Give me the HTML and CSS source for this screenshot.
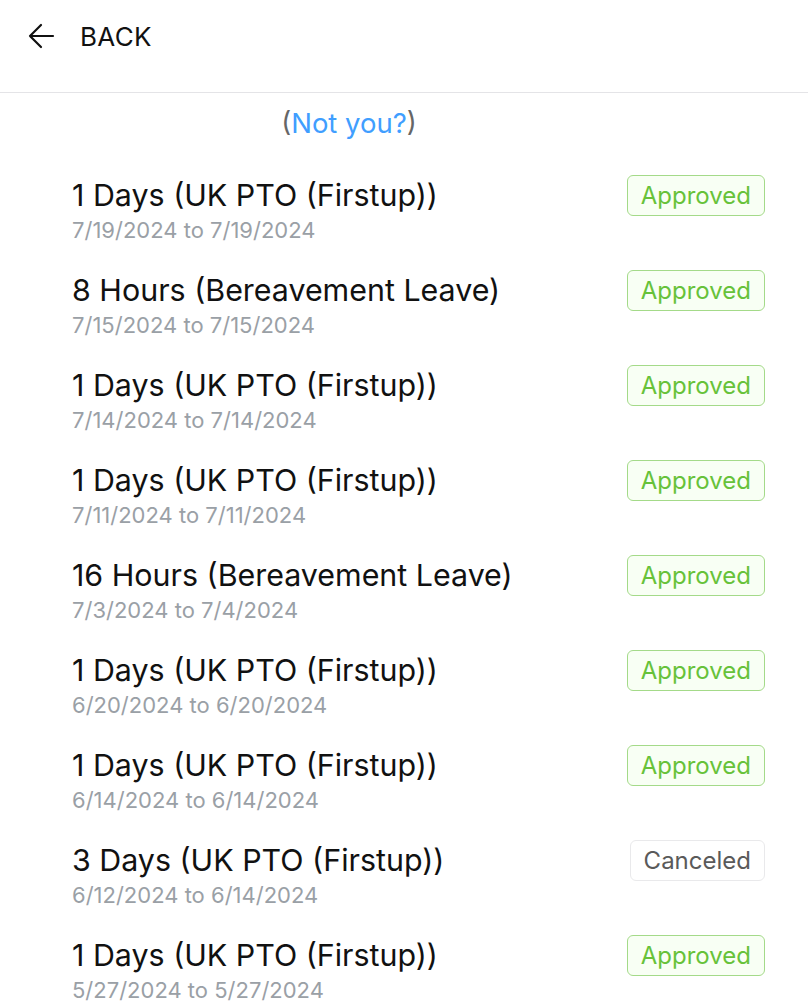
FILE: index.html
```html
<!DOCTYPE html>
<html>
<head>
<meta charset="utf-8">
<link rel="stylesheet" href="styles.css">
</head>
<body>
<header class="topbar">
  <svg class="back-icon" width="28" height="28" viewBox="0 0 28 28"><path d="M26 14H3M14 3L3 14l11 11" fill="none" stroke="#111" stroke-width="2.2" stroke-linecap="round" stroke-linejoin="round"/></svg>
  <span class="back-text">BACK</span>
</header>
<div class="notyou"><span class="paren">(</span><a class="link">Not you?</a><span class="paren">)</span></div>
<ul class="list">
  <li class="row"><div class="info"><div class="title">1 Days (UK PTO (Firstup))</div><div class="dates">7/19/2024 to 7/19/2024</div></div><span class="tag ok">Approved</span></li>
  <li class="row"><div class="info"><div class="title">8 Hours (Bereavement Leave)</div><div class="dates">7/15/2024 to 7/15/2024</div></div><span class="tag ok">Approved</span></li>
  <li class="row"><div class="info"><div class="title">1 Days (UK PTO (Firstup))</div><div class="dates">7/14/2024 to 7/14/2024</div></div><span class="tag ok">Approved</span></li>
  <li class="row"><div class="info"><div class="title">1 Days (UK PTO (Firstup))</div><div class="dates">7/11/2024 to 7/11/2024</div></div><span class="tag ok">Approved</span></li>
  <li class="row"><div class="info"><div class="title">16 Hours (Bereavement Leave)</div><div class="dates">7/3/2024 to 7/4/2024</div></div><span class="tag ok">Approved</span></li>
  <li class="row"><div class="info"><div class="title">1 Days (UK PTO (Firstup))</div><div class="dates">6/20/2024 to 6/20/2024</div></div><span class="tag ok">Approved</span></li>
  <li class="row"><div class="info"><div class="title">1 Days (UK PTO (Firstup))</div><div class="dates">6/14/2024 to 6/14/2024</div></div><span class="tag ok">Approved</span></li>
  <li class="row"><div class="info"><div class="title">3 Days (UK PTO (Firstup))</div><div class="dates">6/12/2024 to 6/14/2024</div></div><span class="tag off">Canceled</span></li>
  <li class="row"><div class="info"><div class="title">1 Days (UK PTO (Firstup))</div><div class="dates">5/27/2024 to 5/27/2024</div></div><span class="tag ok">Approved</span></li>
</ul>
</body>
</html>
```
FILE: styles.css
```css
* { box-sizing: border-box; }
html, body { margin: 0; padding: 0; background: #fff; }
body { font-family: Inter, "Noto Sans", sans-serif; color: #111; overflow: hidden; }
.topbar {
  height: 93px;
  display: flex;
  align-items: center;
  padding: 0 0 20px 27px;
  border-bottom: 1px solid #e4e4e7;
}
.back-icon { margin-right: 25px; }
.back-text { font-size: 26px; letter-spacing: 0.3px; }
.notyou {
  text-align: center;
  padding-right: 110px;
  padding-top: 14px;
  font-size: 27.5px;
  line-height: 32px;
}
.paren { color: #666; }
.link { color: #409eff; }
.list { list-style: none; margin: 0; padding: 37px 43px 0 72px; }
.row {
  display: flex;
  justify-content: space-between;
  align-items: flex-start;
  height: 95px;
}
.title { font-size: 30.4px; line-height: 38px; color: #111; }
.dates { font-size: 22px; line-height: 24px; color: #9aa0a6; margin-top: 4px; }
.tag {
  margin-top: -1px;
  height: 41px;
  padding: 0 13px;
  display: inline-flex;
  align-items: center;
  font-size: 24px;
  border-radius: 6px;
  border: 1.5px solid;
}
.tag.ok { color: #67c23a; border-color: #a4da89; background: #f8fff4; }
.tag.off { color: #5a5a5a; border-color: #e9e9eb; background: #fff; }
```
